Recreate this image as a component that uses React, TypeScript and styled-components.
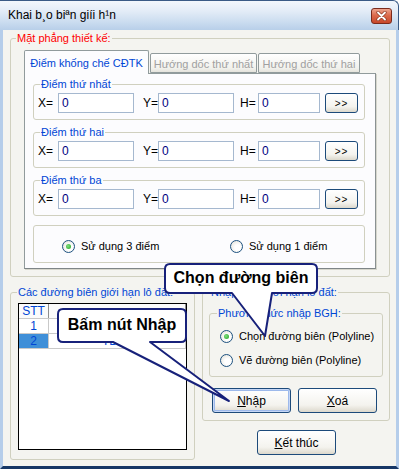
import styled, { createGlobalStyle } from 'styled-components'

const Global = createGlobalStyle`
  body { margin: 0; background: #fff; }
  * { box-sizing: border-box; }
`

const Window = styled.div`
  position: relative;
  width: 399px;
  height: 469px;
  display: flex;
  flex-direction: column;
  font-family: 'Liberation Sans', Arial, sans-serif;
  font-size: 11px;
  color: #000;
  overflow: hidden;
`

const TitleBar = styled.div`
  height: 30px;
  flex: none;
  display: flex;
  align-items: center;
  justify-content: space-between;
  padding: 0 6px 2px 8px;
  background: linear-gradient(to bottom, #f3f7fc 0%, #e3ecf7 35%, #c9dbef 75%, #b8cfe9 100%);
  border-top: 1px solid #3a5a86;
  border-right: 1px solid #3a5a86;
  border-radius: 0 6px 0 0;
`

const Title = styled.span`
  font-size: 12px;
  color: #000;
`

const CloseBtn = styled.div`
  width: 21px;
  height: 16px;
  margin-top: 2px;
  border: 1px solid #7b2b1c;
  border-radius: 3px;
  background: linear-gradient(to bottom, #eea58f 0%, #dc6a4c 45%, #c7472a 100%);
  display: flex;
  align-items: center;
  justify-content: center;
`

const Body = styled.div`
  flex: 1;
  background: #f4f4f0;
  border-left: 3px solid #b5cdea;
  border-right: 3px solid #b5cdea;
  border-bottom: 3px solid #163766;
  padding: 2px 6px 0 7px;
`

const Group = styled.fieldset<{ $w?: number; $h?: number }>`
  margin: 0;
  padding: 0;
  min-width: 0;
  border: 1px solid #d0d0bf;
  border-radius: 3px;
  ${(p) => (p.$w ? `width: ${p.$w}px;` : '')}
  ${(p) => (p.$h ? `height: ${p.$h}px;` : '')}
`

const Legend = styled.legend<{ $red?: boolean; $off?: number }>`
  padding: 0 1px;
  margin-left: ${(p) => p.$off ?? 5}px;
  height: 13px;
  line-height: 13px;
  font-size: 11px;
  white-space: nowrap;
  color: ${(p) => (p.$red ? '#ff0000' : '#0046d5')};
`

const Inner = styled.div<{ $pad: string }>`
  padding: ${(p) => p.$pad};
`

const TabStrip = styled.div`
  display: flex;
  align-items: flex-end;
  height: 24px;
  position: relative;
  z-index: 1;
`

const Tab = styled.div<{ $active?: boolean; $w: number }>`
  width: ${(p) => p.$w}px;
  height: ${(p) => (p.$active ? 24 : 20)}px;
  margin-right: 1px;
  margin-bottom: ${(p) => (p.$active ? -1 : 0)}px;
  display: flex;
  align-items: center;
  justify-content: center;
  border: 1px solid #919b9c;
  border-bottom: ${(p) => (p.$active ? 'none' : '1px solid #919b9c')};
  border-radius: 2px 2px 0 0;
  background: ${(p) => (p.$active ? '#fcfcfe' : 'linear-gradient(to bottom, #ffffff, #f1f1ec 80%, #e4e3dc)')};
  color: ${(p) => (p.$active ? '#0046d5' : '#a0a0a0')};
  font-size: 11px;
  white-space: nowrap;
  padding-top: ${(p) => (p.$active ? 0 : 1)}px;
`

const TabPanel = styled.div`
  height: 196px;
  border: 1px solid #919b9c;
  border-right-color: #8a9192;
  border-bottom-color: #7e8587;
  background: #fcfcfe;
  padding: 4px 10px 5px 8px;
  box-shadow: 1px 1px 0 #d6d6cc;
`

const PointGroup = styled(Group)`
  height: 42px;
  margin-bottom: 6px;
`

const FieldRow = styled.div`
  display: flex;
  align-items: center;
  height: 20px;
  padding-left: 4px;
`

const FieldLabel = styled.span<{ $w: number; $pl?: number }>`
  width: ${(p) => p.$w}px;
  padding-left: ${(p) => p.$pl ?? 0}px;
  font-size: 12px;
  flex: none;
`

const TextBox = styled.div<{ $w: number }>`
  width: ${(p) => p.$w}px;
  height: 20px;
  border: 1px solid #a5b8cf;
  background: #fff;
  color: #000080;
  font-size: 12px;
  line-height: 18px;
  padding-left: 3px;
  flex: none;
`

const SmallBtn = styled.div`
  width: 33px;
  height: 20px;
  margin-left: 5px;
  border: 1px solid #1c4a7a;
  border-radius: 3px;
  background: linear-gradient(to bottom, #ffffff 0%, #f4f3ee 70%, #dcd8cc 100%);
  display: flex;
  align-items: center;
  justify-content: center;
  font-size: 10px;
  letter-spacing: 1px;
`

const RadioBox = styled.div`
  margin-top: 9px;
  height: 38px;
  border: 1px solid #d0d0bf;
  border-radius: 3px;
  display: flex;
  align-items: center;
  padding: 4px 0 0 28px;
`

const RadioItem = styled.label<{ $w?: number; $h?: number }>`
  display: flex;
  align-items: center;
  gap: 6px;
  font-size: 11px;
  white-space: nowrap;
  ${(p) => (p.$w ? `width: ${p.$w}px;` : '')}
  height: ${(p) => p.$h ?? 20}px;
`

const RadioDot = styled.span<{ $on?: boolean }>`
  width: 13px;
  height: 13px;
  border-radius: 50%;
  border: 1px solid #1c5180;
  background: radial-gradient(circle at 60% 60%, #ffffff 30%, #dedcd3 100%);
  display: flex;
  align-items: center;
  justify-content: center;
  flex: none;
  &::after {
    content: '';
    display: ${(p) => (p.$on ? 'block' : 'none')};
    width: 5px;
    height: 5px;
    border-radius: 50%;
    background: radial-gradient(circle at 40% 40%, #7fe07f, #21a121);
  }
`

const BottomRow = styled.div`
  display: flex;
  gap: 7px;
  margin-top: 9px;
`

const GridBox = styled.div`
  width: 169px;
  height: 147px;
  border: 1px solid #000;
  background: #fff;
`

const GridRow = styled.div`
  display: grid;
  grid-template-columns: 30px 1fr;
  height: 15px;
  border-bottom: 1px solid #c9c9c9;
`

const Cell = styled.div<{ $sel?: boolean; $head?: boolean }>`
  display: flex;
  align-items: ${(p) => (p.$head ? 'flex-start' : 'center')};
  justify-content: center;
  border-right: 1px solid ${(p) => (p.$head ? '#8e8e8e' : '#c9c9c9')};
  background: ${(p) => (p.$sel ? '#3f8fd8' : p.$head ? '#fbfbfb' : '#fff')};
  color: #0046d5;
  font-size: 12px;
  line-height: 14px;
  overflow: hidden;
  white-space: nowrap;
`

const RightCol = styled.div`
  display: flex;
  flex-direction: column;
`

const ButtonRow = styled.div`
  display: flex;
  gap: 7px;
  margin-top: 11px;
  padding-left: 3px;
`

const PushBtn = styled.div<{ $focus?: boolean }>`
  width: 79px;
  height: 25px;
  border: 1px solid #1c4a7a;
  border-radius: 3px;
  background: linear-gradient(to bottom, #ffffff 0%, #f4f3ee 70%, #dcd8cc 100%);
  box-shadow: ${(p) => (p.$focus ? 'inset 0 0 0 1px #c6d7f6, inset 0 0 0 2px #9db9eb' : 'none')};
  display: flex;
  align-items: center;
  justify-content: center;
  font-size: 12px;
  u { text-decoration: underline; }
`

const EndBtn = styled(PushBtn)`
  margin: 9px 0 0 55px;
`

const Callout = styled.div<{ $x: number; $y: number; $w: number; $h: number }>`
  position: absolute;
  left: ${(p) => p.$x}px;
  top: ${(p) => p.$y}px;
  width: ${(p) => p.$w}px;
  height: ${(p) => p.$h}px;
  svg { position: absolute; left: 0; top: 0; }
`

const CalloutText = styled.div<{ $w: number; $h: number }>`
  position: absolute;
  left: 1px;
  top: 1px;
  width: ${(p) => p.$w}px;
  height: ${(p) => p.$h}px;
  display: flex;
  align-items: center;
  justify-content: center;
  font-family: 'Liberation Sans', Arial, sans-serif;
  font-weight: bold;
  font-size: 16px;
  color: #000;
  padding-bottom: 1px;
`

type Bubble = { x: number; y: number; bw: number; bh: number; bl: number; br: number; tx: number; ty: number; text: string }

const bubblePath = (b: Bubble) => {
  const r = 5
  const x0 = 1
  const y0 = 1
  const x1 = 1 + b.bw
  const y1 = 1 + b.bh
  return `M${x0 + r},${y0} H${x1 - r} Q${x1},${y0} ${x1},${y0 + r} V${y1 - r} Q${x1},${y1} ${x1 - r},${y1} H${b.br} L${b.tx},${b.ty} L${b.bl},${y1} H${x0 + r} Q${x0},${y1} ${x0},${y1 - r} V${y0 + r} Q${x0},${y0} ${x0 + r},${y0} Z`
}

const Bubble = ({ b }: { b: Bubble }) => {
  const w = Math.max(b.bw, b.tx) + 3
  const h = b.ty + 3
  return (
    <Callout $x={b.x} $y={b.y} $w={w} $h={h}>
      <svg width={w} height={h}>
        <path d={bubblePath(b)} fill='#fff' stroke='#17217a' strokeWidth={2} strokeLinejoin='round' />
      </svg>
      <CalloutText $w={b.bw} $h={b.bh}>{b.text}</CalloutText>
    </Callout>
  )
}

const bubbles: Bubble[] = [
  { x: 164, y: 263, bw: 152, bh: 29, bl: 68, br: 108, tx: 101, ty: 73, text: 'Chọn đường biên' },
  { x: 57, y: 308, bw: 128, bh: 33, bl: 56, br: 93, tx: 172, ty: 93, text: 'Bấm nút Nhập' },
]

const points = ['Điểm thứ nhất', 'Điểm thứ hai', 'Điểm thứ ba']

export default function App() {
  return (
    <>
      <Global />
      <Window>
        <TitleBar>
          <Title>Khai b¸o biªn giíi h¹n</Title>
          <CloseBtn>
            <svg width='11' height='10' viewBox='0 0 11 10'>
              <path d='M2 1.5 L9 8.5 M9 1.5 L2 8.5' stroke='#8a3a26' strokeWidth='3.2' strokeLinecap='round' />
              <path d='M2 1.5 L9 8.5 M9 1.5 L2 8.5' stroke='#fff' strokeWidth='1.8' strokeLinecap='round' />
            </svg>
          </CloseBtn>
        </TitleBar>
        <Body>
          <Group $w={380}>
            <Legend $red $off={5}>Mặt phẳng thiết kế:</Legend>
            <Inner $pad='4px 13px 7px 13px'>
              <TabStrip>
                <Tab $active $w={125}>Điểm khống chế CĐTK</Tab>
                <Tab $w={107}>Hướng dốc thứ nhất</Tab>
                <Tab $w={102}>Hướng dốc thứ hai</Tab>
              </TabStrip>
              <TabPanel>
                {points.map((name) => (
                  <PointGroup key={name}>
                    <Legend $off={6}>{name}</Legend>
                    <Inner $pad='2px 0 6px 0'>
                      <FieldRow>
                        <FieldLabel $w={20}>X=</FieldLabel>
                        <TextBox $w={76}>0</TextBox>
                        <FieldLabel $w={24} $pl={9}>Y=</FieldLabel>
                        <TextBox $w={76}>0</TextBox>
                        <FieldLabel $w={24} $pl={6}>H=</FieldLabel>
                        <TextBox $w={62}>0</TextBox>
                        <SmallBtn>&gt;&gt;</SmallBtn>
                      </FieldRow>
                    </Inner>
                  </PointGroup>
                ))}
                <RadioBox>
                  <RadioItem $w={168}>
                    <RadioDot $on />
                    Sử dụng 3 điểm
                  </RadioItem>
                  <RadioItem>
                    <RadioDot />
                    Sử dụng 1 điểm
                  </RadioItem>
                </RadioBox>
              </TabPanel>
            </Inner>
          </Group>

          <BottomRow>
            <Group $w={185} $h={174}>
              <Legend $off={6}>Các đường biên giới hạn lô đất:</Legend>
              <Inner $pad='4px 7px 8px 7px'>
                <GridBox>
                  <GridRow>
                    <Cell $head>STT</Cell>
                    <Cell $head />
                  </GridRow>
                  <GridRow>
                    <Cell>1</Cell>
                    <Cell />
                  </GridRow>
                  <GridRow>
                    <Cell $sel>2</Cell>
                    <Cell>TBS1</Cell>
                  </GridRow>
                </GridBox>
              </Inner>
            </Group>

            <RightCol>
              <Group $w={188}>
                <Legend $off={7}>Nhập biên giới hạn lô đất:</Legend>
                <Inner $pad='8px 6px 7px 6px'>
                  <Group>
                    <Legend $off={7}>Phương thức nhập BGH:</Legend>
                    <Inner $pad='4px 0 4px 10px'>
                      <RadioItem $h={24}>
                        <RadioDot $on />
                        Chọn đường biên (Polyline)
                      </RadioItem>
                      <RadioItem $h={24}>
                        <RadioDot />
                        Vẽ đường biên (Polyline)
                      </RadioItem>
                    </Inner>
                  </Group>
                  <ButtonRow>
                    <PushBtn $focus>
                      <u>N</u>hập
                    </PushBtn>
                    <PushBtn>
                      <u>X</u>oá
                    </PushBtn>
                  </ButtonRow>
                </Inner>
              </Group>
              <EndBtn>
                <u>K</u>ết thúc
              </EndBtn>
            </RightCol>
          </BottomRow>
        </Body>
        {bubbles.map((b) => (
          <Bubble key={b.text} b={b} />
        ))}
      </Window>
    </>
  )
}
